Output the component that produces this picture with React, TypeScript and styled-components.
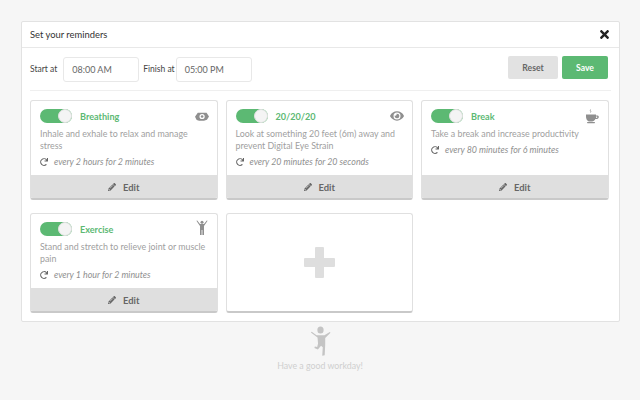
import React from 'react';
import styled, { createGlobalStyle } from 'styled-components';
import { FaEye, FaPencilAlt, FaRedo, FaTimes } from 'react-icons/fa';

const GlobalStyle = createGlobalStyle`
  html, body {
    margin: 0;
    padding: 0;
    background: #f6f6f6;
    font-family: Lato, "Open Sans", sans-serif;
  }
`;

const Page = styled.div`
  box-sizing: border-box;
  width: 640px;
  height: 400px;
  padding: 21px 20px 0 21px;
  overflow: hidden;
`;

const Panel = styled.div`
  box-sizing: border-box;
  height: 301px;
  background: #fff;
  border: 1px solid #e2e2e2;
  border-radius: 2px;
`;

const Header = styled.div`
  height: 25px;
  padding: 0 8px 0 8px;
  display: flex;
  align-items: center;
  justify-content: space-between;
  border-bottom: 1px solid #e8e8e8;
  font-size: 9.4px;
  color: #333;
`;

const Close = styled.span`
  display: flex;
  font-size: 13px;
  color: #222;
`;

const Body = styled.div`
  padding: 8px 8px 0;
`;

const Controls = styled.div`
  display: flex;
  align-items: center;
  height: 26px;
  padding: 0 3px 8px 0;
  margin-bottom: 9px;
  border-bottom: 1px solid #efefef;
  font-size: 8.5px;
  color: #444;
`;

const TimeLabel = styled.label<{ $gap: number }>`
  margin-right: ${(p) => p.$gap}px;
`;

const TimeInput = styled.div`
  box-sizing: border-box;
  width: 76px;
  height: 25px;
  margin-right: 4px;
  padding-left: 8px;
  display: flex;
  align-items: center;
  border: 1px solid #e8e8e8;
  border-radius: 3px;
  font-size: 9px;
  color: #666;
`;

const Actions = styled.div`
  margin-left: auto;
  display: flex;
  gap: 4px;
  align-self: flex-start;
`;

const Button = styled.button<{ $primary?: boolean }>`
  box-sizing: border-box;
  padding: 0;
  height: 23px;
  width: ${(p) => (p.$primary ? '46px' : '50px')};
  border: none;
  border-radius: 2px;
  font-family: inherit;
  font-size: 8.6px;
  font-weight: 700;
  background: ${(p) => (p.$primary ? '#5cb973' : '#e2e2e2')};
  color: ${(p) => (p.$primary ? '#fff' : '#666')};
`;

const Grid = styled.div`
  display: grid;
  grid-template-columns: repeat(3, 187.5px);
  grid-auto-rows: 100px;
  column-gap: 8px;
  row-gap: 13px;
`;

const Card = styled.div`
  box-sizing: border-box;
  display: flex;
  flex-direction: column;
  border: 1px solid #e0e0e0;
  border-bottom: 2px solid #c9c9c9;
  border-radius: 3px;
  overflow: hidden;
  background: #fff;
`;

const CardBody = styled.div`
  flex: 1;
  padding: 8px 8px 0 9px;
`;

const CardTop = styled.div`
  display: flex;
  align-items: center;
  height: 14px;
  margin-bottom: 5px;
`;

const Toggle = styled.span`
  position: relative;
  flex: none;
  width: 32px;
  height: 14px;
  border-radius: 7px;
  background: #5cb973;
  margin-right: 8px;

  &::after {
    content: '';
    position: absolute;
    top: 0;
    right: 0;
    box-sizing: border-box;
    width: 14px;
    height: 14px;
    border-radius: 50%;
    background: #f4f4f4;
    border: 1px solid #e0e0e0;
  }
`;

const Title = styled.span`
  font-size: 9.1px;
  font-weight: 700;
  color: #5cb973;
`;

const IconSlot = styled.span`
  margin-left: auto;
  display: flex;
  align-items: center;
  color: #8f8f8f;
`;

const Description = styled.p`
  margin: 0;
  font-size: 8.85px;
  line-height: 12px;
  color: #a0a0a0;
`;

const Schedule = styled.div`
  display: flex;
  align-items: center;
  margin-top: 4px;
  font-size: 8.9px;
  font-style: italic;
  color: #8f8f8f;
  line-height: 12px;

  svg {
    flex: none;
    width: 8px;
    height: 8px;
    margin-right: 6px;
    color: #666;
  }
`;

const EditBar = styled.div`
  flex: none;
  box-sizing: border-box;
  height: 23px;
  padding-top: 1px;
  display: flex;
  align-items: center;
  justify-content: center;
  gap: 7px;
  background: #dfdfdf;
  font-size: 9.4px;
  font-weight: 700;
  color: #666;

  svg {
    width: 8px;
    height: 8px;
  }
`;

const AddCard = styled(Card)`
  align-items: center;
  justify-content: center;
  color: #dedede;
`;

const Footer = styled.div`
  display: flex;
  flex-direction: column;
  align-items: center;
  width: 598px;
  padding-top: 4px;
  font-size: 8.8px;
  color: #cfcfcf;

  svg {
    margin-bottom: 4px;
  }
`;

const BreathIcon = () => (
  <svg width="14" height="11" viewBox="0 0 15 11">
    <path
      fillRule="evenodd"
      fill="currentColor"
      d="M3 1.4h9.4L15 5.5l-2.2 3.6-3.2.9H4.4L1.8 9.3 0 5.9zM7.6 2.7a2.8 2.8 0 100 5.6 2.8 2.8 0 000-5.6z"
    />
    <circle cx="7.6" cy="5.5" r="1.4" fill="currentColor" />
  </svg>
);

const CupIcon = () => (
  <svg width="15" height="15" viewBox="0 0 15 15">
    <path fill="none" stroke="currentColor" strokeWidth="0.8" d="M5.5 0.5c-1 1 1 1.6 0 3" />
    <path
      fill="currentColor"
      d="M1 5.5h10v1h1.6c1.6 0 1.8 3.3-.6 3.5h-1.6C9.6 11.5 8.5 12.5 7 12.5H4.6C2.4 12.5 1 10 1 7.5zM11 7.5v1.5c1.7 0 1.7-1.5.6-1.5z"
    />
    <rect x="2" y="13" width="8" height="1.2" rx="0.6" fill="currentColor" />
  </svg>
);

const StretchIcon = () => (
  <svg width="12" height="15" viewBox="0 0 12 15" style={{ marginRight: 1, marginTop: -3 }}>
    <circle cx="6" cy="2.2" r="1.5" fill="currentColor" />
    <path
      fill="currentColor"
      d="M.4.8l.8-.4L4 4h4L10.8.4l.8.4L8 6v9H6.4v-5h-.8v5H4V6z"
    />
  </svg>
);

const PlusIcon = () => (
  <svg width="33" height="33" viewBox="0 0 33 33">
    <path
      fill="currentColor"
      d="M12 2a1 1 0 011-1h7a1 1 0 011 1v10h10a1 1 0 011 1v7a1 1 0 01-1 1H21v10a1 1 0 01-1 1h-7a1 1 0 01-1-1V21H2a1 1 0 01-1-1v-7a1 1 0 011-1h10z"
    />
  </svg>
);

const JumpIcon = () => (
  <svg width="21" height="30" viewBox="0 0 24 30" preserveAspectRatio="none">
    <circle cx="12" cy="4" r="3.6" fill="#c4c4c4" />
    <path
      fill="#c4c4c4"
      d="M1 6.5l1-.8 5.5 3.6h9L22.6 6l.8.8-6 5.2v6.5l-.6 10.8-2.8.4.6-8.5-2-1.4L9 23.4 5 22l.6-1.4 2.6.4 1-3.4-.6-6z"
    />
  </svg>
);

interface Reminder {
  title: string;
  icon: React.ReactNode;
  description: string;
  schedule: string;
}

const reminders: Reminder[] = [
  {
    title: 'Breathing',
    icon: <BreathIcon />,
    description: 'Inhale and exhale to relax and manage stress',
    schedule: 'every 2 hours for 2 minutes',
  },
  {
    title: '20/20/20',
    icon: <FaEye size={14} />,
    description: 'Look at something 20 feet (6m) away and prevent Digital Eye Strain',
    schedule: 'every 20 minutes for 20 seconds',
  },
  {
    title: 'Break',
    icon: <CupIcon />,
    description: 'Take a break and increase productivity',
    schedule: 'every 80 minutes for 6 minutes',
  },
  {
    title: 'Exercise',
    icon: <StretchIcon />,
    description: 'Stand and stretch to relieve joint or muscle pain',
    schedule: 'every 1 hour for 2 minutes',
  },
];

export default function App() {
  return (
    <Page>
      <GlobalStyle />
      <Panel>
        <Header>
          <span>Set your reminders</span>
          <Close>
            <FaTimes />
          </Close>
        </Header>
        <Body>
          <Controls>
            <TimeLabel $gap={6}>Start at</TimeLabel>
            <TimeInput>08:00 AM</TimeInput>
            <TimeLabel $gap={1}>Finish at</TimeLabel>
            <TimeInput>05:00 PM</TimeInput>
            <Actions>
              <Button>Reset</Button>
              <Button $primary>Save</Button>
            </Actions>
          </Controls>
          <Grid>
            {reminders.map((r) => (
              <Card key={r.title}>
                <CardBody>
                  <CardTop>
                    <Toggle />
                    <Title>{r.title}</Title>
                    <IconSlot>{r.icon}</IconSlot>
                  </CardTop>
                  <Description>{r.description}</Description>
                  <Schedule>
                    <FaRedo />
                    {r.schedule}
                  </Schedule>
                </CardBody>
                <EditBar>
                  <FaPencilAlt />
                  Edit
                </EditBar>
              </Card>
            ))}
            <AddCard>
              <PlusIcon />
            </AddCard>
          </Grid>
        </Body>
      </Panel>
      <Footer>
        <JumpIcon />
        Have a good workday!
      </Footer>
    </Page>
  );
}
